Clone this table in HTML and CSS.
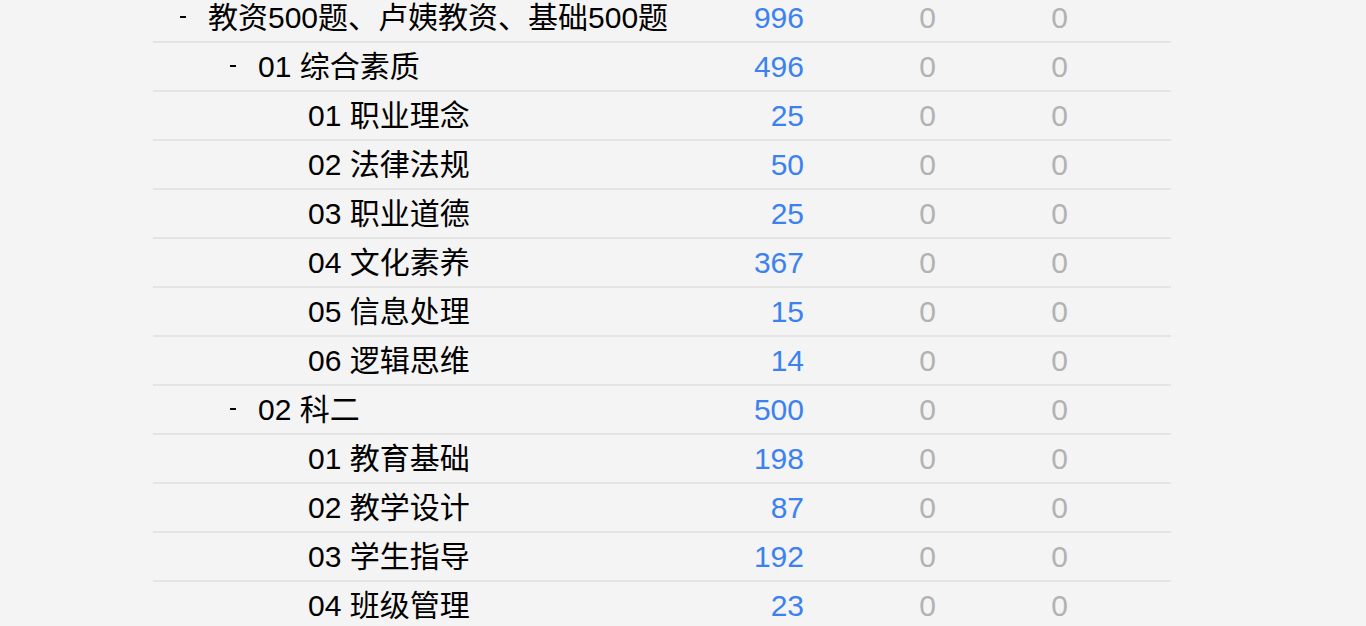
FILE: index.html
```html
<!DOCTYPE html>
<html lang="zh">
<head>
<meta charset="utf-8">
<title>题库统计</title>
<link rel="stylesheet" href="styles.css">
</head>
<body>
<div class="table">
  <div class="row lv0"><div class="name"><span class="toggle"><i class="dash"></i></span>教资500题、卢姨教资、基础500题</div><div class="num">996</div><div class="zero">0</div><div class="zero">0</div><div></div></div>
  <div class="row lv1"><div class="name"><span class="toggle"><i class="dash"></i></span>01 综合素质</div><div class="num">496</div><div class="zero">0</div><div class="zero">0</div><div></div></div>
  <div class="row lv2"><div class="name"><span class="toggle"></span>01 职业理念</div><div class="num">25</div><div class="zero">0</div><div class="zero">0</div><div></div></div>
  <div class="row lv2"><div class="name"><span class="toggle"></span>02 法律法规</div><div class="num">50</div><div class="zero">0</div><div class="zero">0</div><div></div></div>
  <div class="row lv2"><div class="name"><span class="toggle"></span>03 职业道德</div><div class="num">25</div><div class="zero">0</div><div class="zero">0</div><div></div></div>
  <div class="row lv2"><div class="name"><span class="toggle"></span>04 文化素养</div><div class="num">367</div><div class="zero">0</div><div class="zero">0</div><div></div></div>
  <div class="row lv2"><div class="name"><span class="toggle"></span>05 信息处理</div><div class="num">15</div><div class="zero">0</div><div class="zero">0</div><div></div></div>
  <div class="row lv2"><div class="name"><span class="toggle"></span>06 逻辑思维</div><div class="num">14</div><div class="zero">0</div><div class="zero">0</div><div></div></div>
  <div class="row lv1"><div class="name"><span class="toggle"><i class="dash"></i></span>02 科二</div><div class="num">500</div><div class="zero">0</div><div class="zero">0</div><div></div></div>
  <div class="row lv2"><div class="name"><span class="toggle"></span>01 教育基础</div><div class="num">198</div><div class="zero">0</div><div class="zero">0</div><div></div></div>
  <div class="row lv2"><div class="name"><span class="toggle"></span>02 教学设计</div><div class="num">87</div><div class="zero">0</div><div class="zero">0</div><div></div></div>
  <div class="row lv2"><div class="name"><span class="toggle"></span>03 学生指导</div><div class="num">192</div><div class="zero">0</div><div class="zero">0</div><div></div></div>
  <div class="row lv2"><div class="name"><span class="toggle"></span>04 班级管理</div><div class="num">23</div><div class="zero">0</div><div class="zero">0</div><div></div></div>
</div>
</body>
</html>
```
FILE: styles.css
```css
html, body {
  margin: 0;
  padding: 0;
  background: #f4f4f4;
  overflow: hidden;
}
body {
  font-family: "Liberation Sans", "Noto Sans CJK SC", sans-serif;
  font-size: 30px;
  color: #000;
}
.table {
  width: 1018px;
  margin-left: 153px;
  margin-top: -6px;
}
.row {
  display: grid;
  grid-template-columns: 519px 132px 132px 132px 103px;
  height: 47px;
  align-items: center;
  border-bottom: 2px solid #e4e4e4;
  line-height: 1;
}
.name {
  display: flex;
  align-items: center;
  white-space: nowrap;
  color: #000;
}
.lv0 .name { padding-left: 24px; }
.lv1 .name { padding-left: 74px; }
.lv2 .name { padding-left: 124px; }
.toggle {
  width: 31px;
  flex: none;
  display: flex;
  align-items: center;
}
.dash {
  display: block;
  width: 6px;
  height: 2px;
  margin-left: 3px;
  margin-top: -2px;
  background: #000;
}
.num {
  text-align: right;
  color: #3b82f0;
}
.zero {
  text-align: right;
  color: #b2b2b2;
}
```
